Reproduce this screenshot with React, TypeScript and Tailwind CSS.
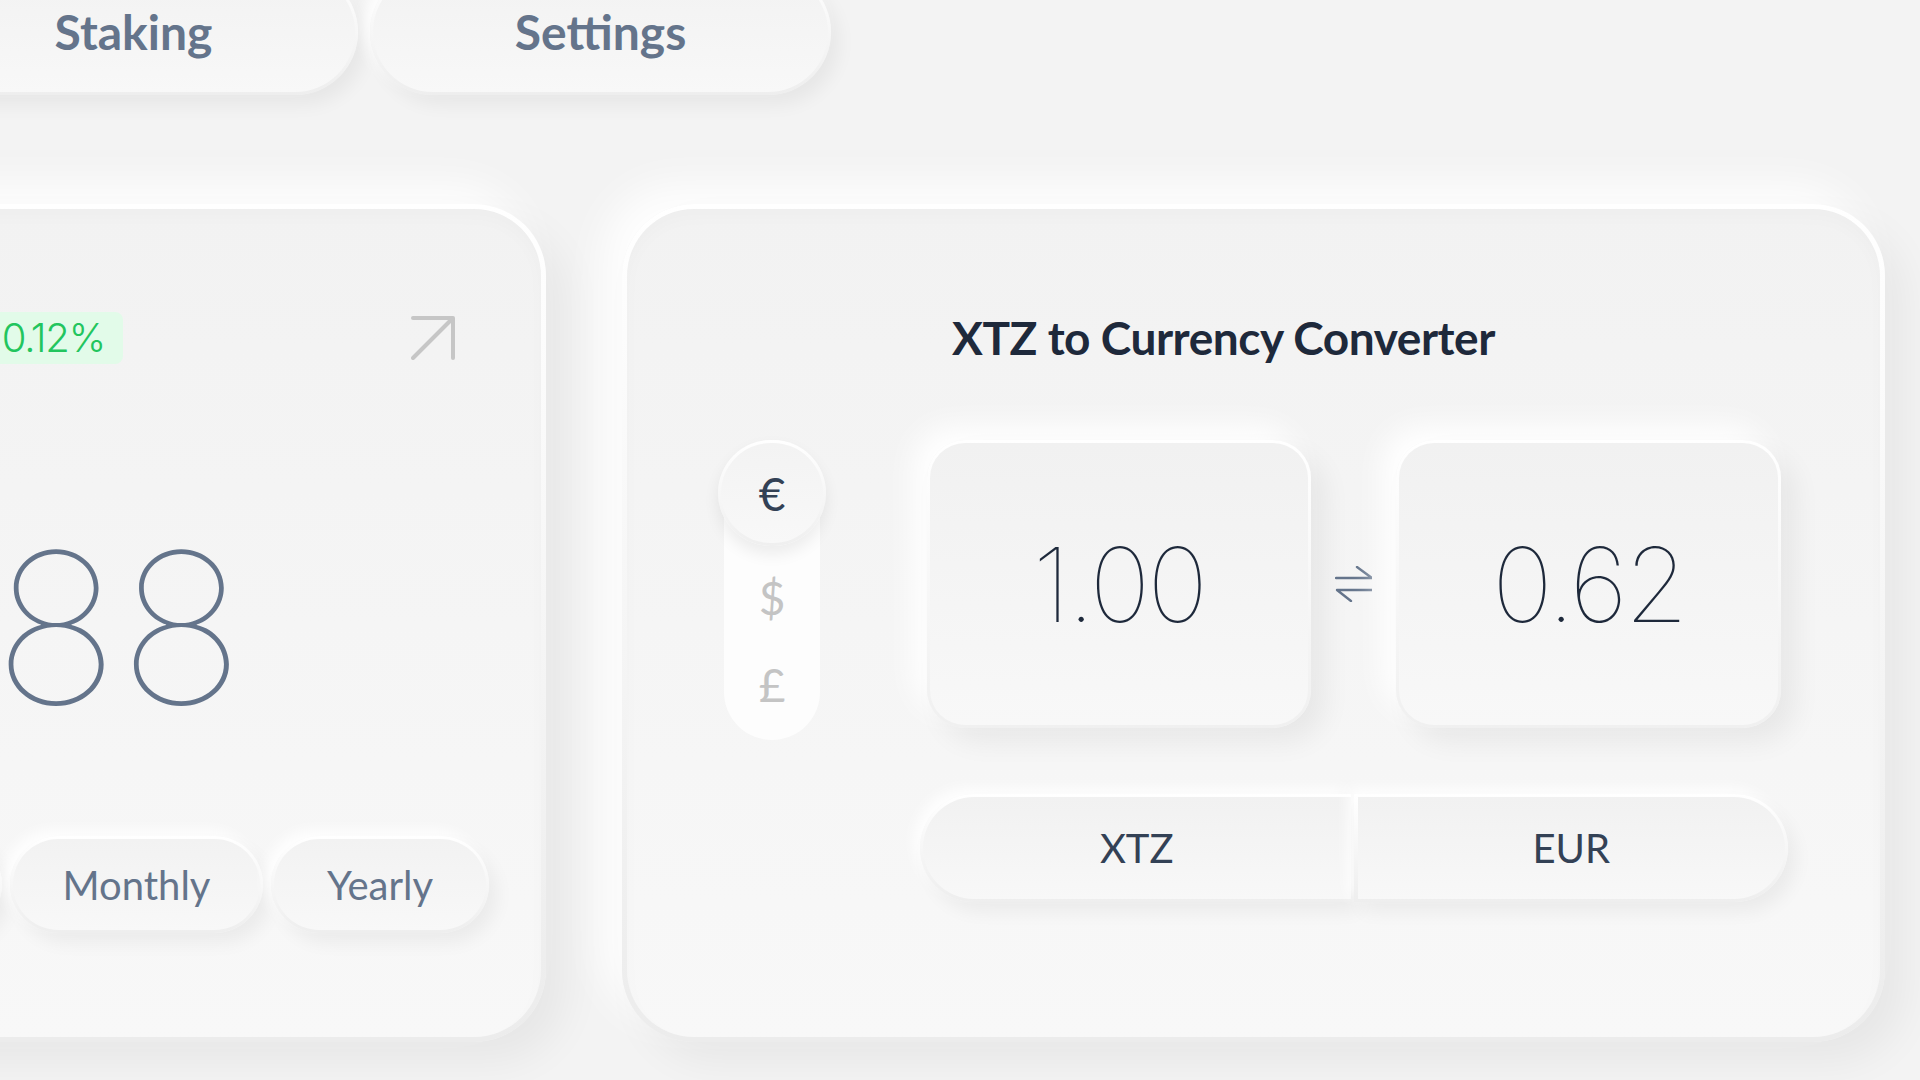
import React from 'react';

const rangeOptions = [
  { label: 'Weekly', width: 'w-[236px]' },
  { label: 'Monthly', width: 'w-[253px]' },
  { label: 'Yearly', width: 'w-[218px]' },
];

const currencies = [
  { symbol: '$', code: 'USD' },
  { symbol: '£', code: 'GBP' },
];

const SoftPill: React.FC<{ label: string; className: string; textClass: string }> = ({ label, className, textClass }) => (
  <div
    className={`shrink-0 rounded-full bg-gradient-to-b from-white to-[#eeeeee] p-[3px] shadow-[8px_10px_18px_rgba(0,0,0,0.05),-6px_-6px_14px_rgba(255,255,255,0.9)] ${className}`}
  >
    <div
      className={`flex h-full w-full items-center justify-center rounded-full bg-gradient-to-b from-[#f2f2f2] to-[#f8f8f8] ${textClass}`}
    >
      {label}
    </div>
  </div>
);

const ValueBox: React.FC<{ value: string; width: string }> = ({ value, width }) => (
  <div
    className={`h-[288px] ${width} rounded-[38px] bg-gradient-to-b from-white to-[#f0f0f0] p-[3px] shadow-[14px_14px_28px_rgba(0,0,0,0.06),-14px_-14px_30px_rgba(255,255,255,1)]`}
  >
    <div className="flex h-full w-full items-center justify-center rounded-[35px] bg-gradient-to-b from-[#f1f1f1] to-[#f8f8f8]">
      <span className="font-['Inter',sans-serif] text-[103px] font-thin leading-none tracking-[-0.03em] text-[#1e293b]">
        {value}
      </span>
    </div>
  </div>
);

export default function App() {
  return (
    <div className="flex h-screen w-full flex-col overflow-hidden bg-[#f3f3f3] font-['Lato',sans-serif]">
      {/* Navegación */}
      <nav className="-ml-[91px] -mt-[31px] flex gap-3">
        <SoftPill label="Staking" className="h-[126px] w-[449px]" textClass="text-[48px] font-bold text-[#64748b]" />
        <SoftPill label="Settings" className="h-[126px] w-[461px]" textClass="text-[48px] font-bold text-[#64748b]" />
      </nav>

      <div className="mt-[109px] flex gap-[76px]">
        {/* Precio */}
        <div className="-ml-[300px] h-[838px] w-[846px] shrink-0 rounded-[72px] bg-gradient-to-b from-white to-[#ececec] p-[5px] shadow-[20px_20px_40px_rgba(0,0,0,0.05),-20px_-20px_40px_rgba(255,255,255,0.9)]">
          <div className="flex h-full w-full flex-col rounded-[67px] bg-gradient-to-b from-[#f2f2f2] to-[#f8f8f8] shadow-[inset_0_8px_18px_rgba(0,0,0,0.02)]">
            <div className="mt-[103px] flex h-[52px] items-center pr-[86px]">
              <div className="flex flex-1 justify-end pr-[288px]">
                <span className="flex h-[52px] items-center rounded-lg bg-[#e2fbe9] pl-4 pr-[18px] font-['Inter',sans-serif] text-[40px] font-light tracking-[-0.03em] text-[#22c55e]">
                  +0.12%
                </span>
              </div>
              <svg width="44" height="44" viewBox="0 0 44 44" fill="none" stroke="#c6c6c6" strokeWidth="4" strokeLinecap="round" strokeLinejoin="round">
                <path d="M2 2H42V42" />
                <path d="M2 42L40 4" />
              </svg>
            </div>

            <div className="mt-[159px] pr-[297px] text-right font-['Inter',sans-serif] text-[210px] font-thin leading-none text-[#64748b]">
              1,288
            </div>

            <div className="mt-[103px] flex justify-end gap-2 pr-[52px]">
              {rangeOptions.map((opt) => (
                <SoftPill
                  key={opt.label}
                  label={opt.label}
                  className={`h-[97px] ${opt.width}`}
                  textClass="text-[40px] text-[#64748b]"
                />
              ))}
            </div>
          </div>
        </div>

        {/* Conversor */}
        <div className="h-[838px] w-[1263px] shrink-0 rounded-[72px] bg-gradient-to-b from-white to-[#ececec] p-[5px] shadow-[20px_20px_40px_rgba(0,0,0,0.05),-20px_-20px_40px_rgba(255,255,255,0.9)]">
          <div className="flex h-full w-full flex-col rounded-[67px] bg-gradient-to-b from-[#f2f2f2] to-[#f8f8f8] shadow-[inset_0_8px_18px_rgba(0,0,0,0.02)]">
            <h1 className="ml-[325px] mt-[106px] text-[46px] font-bold leading-none tracking-[-0.01em] text-[#1e293b]">
              XTZ to Currency Converter
            </h1>

            <div className="mt-[79px] flex gap-[100px] pl-[97px]">
              {/* Selector de moneda */}
              <div className="flex h-[300px] w-[96px] flex-col items-center rounded-full bg-[#fdfdfd]">
                <div className="-mx-[6px] flex h-[106px] w-[108px] shrink-0 items-center justify-center rounded-full bg-gradient-to-b from-white to-[#efefef] p-[3px] shadow-[0_8px_16px_rgba(0,0,0,0.07)]">
                  <div className="flex h-full w-full items-center justify-center rounded-full bg-gradient-to-b from-[#f3f3f3] to-[#f8f8f8] text-[46px] text-[#334155]">
                    €
                  </div>
                </div>
                <div className="mt-[8px] flex flex-col">
                  {currencies.map((c) => (
                    <div key={c.code} className="flex h-[87px] items-center justify-center text-[46px] text-[#c4c4c4]">
                      {c.symbol}
                    </div>
                  ))}
                </div>
              </div>

              {/* Cajas */}
              <div className="flex w-[868px] flex-col">
                <div className="flex items-center gap-6 px-[7px]">
                  <ValueBox value="1.00" width="w-[384px]" />
                  <svg width="38" height="36" viewBox="0 0 38 36" fill="none" stroke="#64748b" strokeWidth="2.4" strokeLinecap="round" strokeLinejoin="round">
                    <path d="M1 12H37L22 1" />
                    <path d="M37 24H2L16 35" />
                  </svg>
                  <ValueBox value="0.62" width="w-[385px]" />
                </div>

                <div className="mt-[66px] flex h-[108px] gap-[3px]">
                  <div className="flex-1 rounded-l-full bg-gradient-to-b from-white to-[#eeeeee] p-[3px] pr-0 shadow-[8px_10px_18px_rgba(0,0,0,0.05),-6px_-6px_14px_rgba(255,255,255,0.9)]">
                    <div className="flex h-full w-full items-center justify-center rounded-l-full bg-gradient-to-b from-[#f1f1f1] to-[#f8f8f8] text-[40px] text-[#334155]">
                      XTZ
                    </div>
                  </div>
                  <div className="flex-1 rounded-r-full bg-gradient-to-b from-white to-[#eeeeee] p-[3px] pl-[4px] shadow-[8px_10px_18px_rgba(0,0,0,0.05),-6px_-6px_14px_rgba(255,255,255,0.9)]">
                    <div className="flex h-full w-full items-center justify-center rounded-r-full bg-gradient-to-b from-[#f1f1f1] to-[#f8f8f8] text-[40px] text-[#334155]">
                      EUR
                    </div>
                  </div>
                </div>
              </div>
            </div>
          </div>
        </div>
      </div>
    </div>
  );
}
